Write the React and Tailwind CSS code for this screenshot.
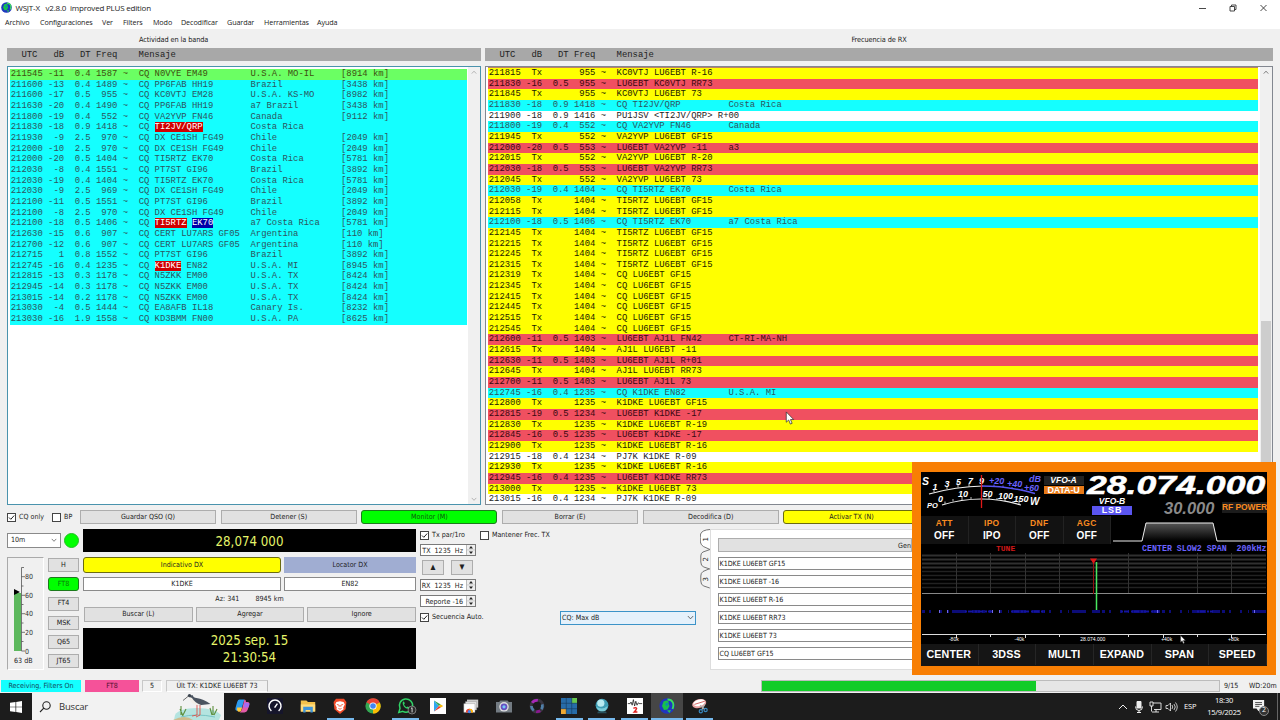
import React from "react";
import clsx from "clsx";

const HEADER = "  UTC   dB   DT Freq    Mensaje";

const MENU = [
  ["Archivo", "w-[35px]"],
  ["Configuraciones", "w-[62px]"],
  ["Ver", "w-[21px]"],
  ["Filters", "w-[30px]"],
  ["Modo", "w-[28px]"],
  ["Decodificar", "w-[46px]"],
  ["Guardar", "w-[37px]"],
  ["Herramientas", "w-[53px]"],
  ["Ayuda", "w-[30px]"],
];

// utc, dB, DT, freq, message, country, distance
const BAND = [
  ["211545", "-11", "0.4", "1587", "CQ N0VYE EM49", "U.S.A. MO-IL", "[8914 km]"],
  ["211600", "-13", "0.4", "1489", "CQ PP6FAB HH19", "Brazil", "[3438 km]"],
  ["211600", "-17", "0.5", "955", "CQ KC0VTJ EM28", "U.S.A. KS-MO", "[8982 km]"],
  ["211630", "-20", "0.4", "1490", "CQ PP6FAB HH19", "a7 Brazil", "[3438 km]"],
  ["211800", "-19", "0.4", "552", "CQ VA2YVP FN46", "Canada", "[9112 km]"],
  ["211830", "-18", "0.9", "1418", "CQ TI2JV/QRP", "Costa Rica", ""],
  ["211930", "-9", "2.5", "970", "CQ DX CE1SH FG49", "Chile", "[2049 km]"],
  ["212000", "-10", "2.5", "970", "CQ DX CE1SH FG49", "Chile", "[2049 km]"],
  ["212000", "-20", "0.5", "1404", "CQ TI5RTZ EK70", "Costa Rica", "[5781 km]"],
  ["212030", "-8", "0.4", "1551", "CQ PT7ST GI96", "Brazil", "[3892 km]"],
  ["212030", "-19", "0.4", "1404", "CQ TI5RTZ EK70", "Costa Rica", "[5781 km]"],
  ["212030", "-9", "2.5", "969", "CQ DX CE1SH FG49", "Chile", "[2049 km]"],
  ["212100", "-11", "0.5", "1551", "CQ PT7ST GI96", "Brazil", "[3892 km]"],
  ["212100", "-8", "2.5", "970", "CQ DX CE1SH FG49", "Chile", "[2049 km]"],
  ["212100", "-18", "0.5", "1406", "CQ TI5RTZ EK70", "a7 Costa Rica", "[5781 km]"],
  ["212630", "-15", "0.6", "907", "CQ CERT LU7ARS GF05", "Argentina", "[110 km]"],
  ["212700", "-12", "0.6", "907", "CQ CERT LU7ARS GF05", "Argentina", "[110 km]"],
  ["212715", "1", "0.8", "1552", "CQ PT7ST GI96", "Brazil", "[3892 km]"],
  ["212745", "-16", "0.4", "1235", "CQ K1DKE EN82", "U.S.A. MI", "[8945 km]"],
  ["212815", "-13", "0.3", "1178", "CQ N5ZKK EM00", "U.S.A. TX", "[8424 km]"],
  ["212945", "-14", "0.3", "1178", "CQ N5ZKK EM00", "U.S.A. TX", "[8424 km]"],
  ["213015", "-14", "0.2", "1178", "CQ N5ZKK EM00", "U.S.A. TX", "[8424 km]"],
  ["213030", "-4", "0.5", "1444", "CQ EA8AFB IL18", "Canary Is.", "[8232 km]"],
  ["213030", "-16", "1.9", "1558", "CQ KD3BMM FN00", "U.S.A. PA", "[8625 km]"],
];

// words picked out in the band list, by row index
const MARKS = {
  5: { "TI2JV/QRP": "bg-[#d00000] text-white" },
  14: { TI5RTZ: "bg-[#d00000] text-white", EK70: "bg-[#0000a8] text-white" },
  18: { K1DKE: "bg-[#d00000] text-white" },
};

const RX = [
  ["y", "211815", "Tx", "", "955", "KC0VTJ LU6EBT R-16"],
  ["r", "211830", "-16", "0.5", "955", "LU6EBT KC0VTJ RR73"],
  ["y", "211845", "Tx", "", "955", "KC0VTJ LU6EBT 73"],
  ["c", "211830", "-18", "0.9", "1418", "CQ TI2JV/QRP", "Costa Rica"],
  ["w", "211900", "-18", "0.9", "1416", "PU1JSV <TI2JV/QRP> R+00"],
  ["c", "211800", "-19", "0.4", "552", "CQ VA2YVP FN46", "Canada"],
  ["y", "211945", "Tx", "", "552", "VA2YVP LU6EBT GF15"],
  ["r", "212000", "-20", "0.5", "553", "LU6EBT VA2YVP -11", "a3"],
  ["y", "212015", "Tx", "", "552", "VA2YVP LU6EBT R-20"],
  ["r", "212030", "-18", "0.5", "553", "LU6EBT VA2YVP RR73"],
  ["y", "212045", "Tx", "", "552", "VA2YVP LU6EBT 73"],
  ["c", "212030", "-19", "0.4", "1404", "CQ TI5RTZ EK70", "Costa Rica"],
  ["y", "212058", "Tx", "", "1404", "TI5RTZ LU6EBT GF15"],
  ["y", "212115", "Tx", "", "1404", "TI5RTZ LU6EBT GF15"],
  ["c", "212100", "-18", "0.5", "1406", "CQ TI5RTZ EK70", "a7 Costa Rica"],
  ["y", "212145", "Tx", "", "1404", "TI5RTZ LU6EBT GF15"],
  ["y", "212215", "Tx", "", "1404", "TI5RTZ LU6EBT GF15"],
  ["y", "212245", "Tx", "", "1404", "TI5RTZ LU6EBT GF15"],
  ["y", "212315", "Tx", "", "1404", "TI5RTZ LU6EBT GF15"],
  ["y", "212319", "Tx", "", "1404", "CQ LU6EBT GF15"],
  ["y", "212345", "Tx", "", "1404", "CQ LU6EBT GF15"],
  ["y", "212415", "Tx", "", "1404", "CQ LU6EBT GF15"],
  ["y", "212445", "Tx", "", "1404", "CQ LU6EBT GF15"],
  ["y", "212515", "Tx", "", "1404", "CQ LU6EBT GF15"],
  ["y", "212545", "Tx", "", "1404", "CQ LU6EBT GF15"],
  ["r", "212600", "-11", "0.5", "1403", "LU6EBT AJ1L FN42", "CT-RI-MA-NH"],
  ["y", "212615", "Tx", "", "1404", "AJ1L LU6EBT -11"],
  ["r", "212630", "-11", "0.5", "1403", "LU6EBT AJ1L R+01"],
  ["y", "212645", "Tx", "", "1404", "AJ1L LU6EBT RR73"],
  ["r", "212700", "-11", "0.5", "1403", "LU6EBT AJ1L 73"],
  ["c", "212745", "-16", "0.4", "1235", "CQ K1DKE EN82", "U.S.A. MI"],
  ["y", "212800", "Tx", "", "1235", "K1DKE LU6EBT GF15"],
  ["r", "212815", "-19", "0.5", "1234", "LU6EBT K1DKE -17"],
  ["y", "212830", "Tx", "", "1235", "K1DKE LU6EBT R-19"],
  ["r", "212845", "-16", "0.5", "1235", "LU6EBT K1DKE -17"],
  ["y", "212900", "Tx", "", "1235", "K1DKE LU6EBT R-16"],
  ["w", "212915", "-18", "0.4", "1234", "PJ7K K1DKE R-09"],
  ["y", "212930", "Tx", "", "1235", "K1DKE LU6EBT R-16"],
  ["r", "212945", "-16", "0.4", "1235", "LU6EBT K1DKE RR73"],
  ["y", "213000", "Tx", "", "1235", "K1DKE LU6EBT 73"],
  ["w", "213015", "-16", "0.4", "1234", "PJ7K K1DKE R-09"],
];

const ROW_COLORS = {
  y: "bg-[#ffff00] text-[#1c1c00]",
  r: "bg-[#f05060] text-[#3a0810]",
  c: "bg-[#14ffff] text-[#2d5560]",
  w: "bg-white text-[#222]",
};

const MONO = "font-['Liberation_Mono',monospace] text-[8.885px] whitespace-pre";

const prefix = (utc, db, dt, freq) =>
  `${utc} ${db.padStart(3)}  ${dt.padStart(3)} ${freq.padStart(4)} ~  `;

const BandRow = ({ row, index }) => {
  const [utc, db, dt, freq, msg, country, dist] = row;
  const marks = MARKS[index] || {};
  const words = msg.split(" ");
  return (
    <div
      className={clsx(
        "h-[10.667px] pl-[0.8px] leading-[11.700px]",
        index === 0 ? "bg-[#6bff63] text-[#3f4f10]" : "bg-[#14ffff] text-[#2d5560]"
      )}
    >
      {prefix(utc, db, dt, freq)}
      {words.map((word, i) => (
        <React.Fragment key={i}>
          <span className={marks[word]}>{word}</span>
          {i < words.length - 1 ? " " : ""}
        </React.Fragment>
      ))}
      {" ".repeat(21 - msg.length)}
      {country.padEnd(17)}
      {dist}
    </div>
  );
};

const Button = ({ className, children }) => (
  <button
    className={clsx(
      "flex items-center justify-center border whitespace-nowrap",
      className || "border-[#adadad] bg-[#e1e1e1]"
    )}
  >
    {children}
  </button>
);

const Check = ({ checked, children }) => (
  <label className="flex items-center gap-[3px] whitespace-nowrap">
    <span className="flex size-[9px] shrink-0 items-center justify-center border border-[#444] bg-white">
      {checked && (
        <svg viewBox="0 0 7 7" className="size-[7px]" fill="none" stroke="#222">
          <path d="M1 3.5 2.8 5.3 6.2 1.5" />
        </svg>
      )}
    </span>
    {children}
  </label>
);

const Spin = ({ children }) => (
  <div className="flex h-[12px] w-[56px] border border-[#7a7a7a] bg-white">
    <span className="flex-1 pr-[3px] text-right leading-[12px] whitespace-pre">{children}</span>
    <span className="flex w-[9px] items-center justify-center border-l border-[#bbb] bg-[#eee]">
      <svg viewBox="0 0 8 10" className="h-[10px] w-[8px]" fill="#222">
        <path d="M4 1 6 3.6H2zM4 9 6 6.4H2z" />
        <path d="M0 4.7h8v.5H0z" fill="#aaa" />
      </svg>
    </span>
  </div>
);

const Chevron = ({ className }) => (
  <svg viewBox="0 0 8 6" className={className} fill="none" stroke="#444" strokeWidth="0.9">
    <path d="M1 1.2 4 4.4 7 1.2" />
  </svg>
);

const Globe = ({ className }) => (
  <svg viewBox="0 0 16 16" className={className}>
    <circle cx="8" cy="8" r="7.7" fill="#2037c0" />
    <path d="M4.500 3.500c3-2 6-1 5 2l1 2.500-2 3.500-3.500.5-2-4z" fill="#19c24a" />
    <path d="M8.500 1.500C14 1.500 15.500 6 13.500 11" fill="none" stroke="#3be05a" strokeWidth="1.800" />
    <path d="M8 12.500l4-.5-1.500 3z" fill="#24c456" />
    <path d="M6 6 8.500 4.500l1 2-2 2z" fill="#0b8fae" />
  </svg>
);

const Cursor = ({ className }) => (
  <svg viewBox="0 0 10 15" className={className}>
    <path d="M1 1v11l2.6-2.4L5.4 14l1.9-.8-1.8-4H9z" fill="#fff" stroke="#333" strokeWidth="0.8" />
  </svg>
);

const TitleBar = () => (
  <div className="flex h-[15px] shrink-0 items-center bg-white font-['Open_Sans',sans-serif] text-[#222]">
    <Globe className="ml-[1px] size-[11px]" />
    <span className="ml-[3.500px] text-[8px] tracking-[-0.2px] whitespace-pre">
      {"WSJT-X   v2.8.0  improved PLUS edition"}
    </span>
    <svg
      viewBox="0 0 70 10"
      className="mr-[11px] ml-auto h-[10px] w-[70px]"
      fill="none"
      stroke="#333"
      strokeWidth="0.9"
    >
      <path d="M0 5.500h7M31 3.500h4.500V8H31zM32.500 3.500V2H37v4.500h-1.500M61.500 2l6 6M67.500 2l-6 6" />
    </svg>
  </div>
);

const BandPanel = () => (
  <section className="flex w-[474px] flex-col">
    <h2 className="flex h-[19px] items-center pt-[4px] pl-[132px] text-[7.300px] tracking-[-0.1px]">
      Actividad en la banda
    </h2>
    <div className={clsx(MONO, "h-[13px] bg-[#a8a8a8] pl-[3.800px] leading-[14.500px] text-[#222]")}>{HEADER}</div>
    <div className="mt-[5px] flex h-[439px] border border-[#4a93ad] bg-white">
      <div className={clsx(MONO, "mt-[2px] ml-[2px] w-[457px]")}>
        {BAND.map((row, i) => (
          <BandRow key={i} row={row} index={i} />
        ))}
      </div>
      <div className="ml-auto flex w-[12px] flex-col items-center justify-between bg-[#f0f0f0] py-[3px]">
        <Chevron className="w-[6px] rotate-180 opacity-50" />
        <Chevron className="w-[6px] opacity-50" />
      </div>
    </div>
  </section>
);

const RxPanel = () => (
  <section className="flex w-[788px] flex-col">
    <h2 className="flex h-[19px] items-center justify-center pt-[4px] text-[7.300px] tracking-[-0.1px]">
      Frecuencia de RX
    </h2>
    <div className={clsx(MONO, "h-[13px] bg-[#a8a8a8] pl-[3.800px] leading-[14.500px] text-[#222]")}>{HEADER}</div>
    <div className="mt-[5px] flex h-[439px] overflow-hidden border border-[#828790] bg-white">
      <div className={clsx(MONO, "ml-[2px] w-[770px] border-t border-[#c08060]")}>
        {RX.map(([kind, utc, db, dt, freq, msg, country], i) => (
          <div key={i} className={clsx("h-[10.667px] pl-[0.8px] leading-[11px]", ROW_COLORS[kind])}>
            {prefix(utc, db, dt, freq) + (country ? msg.padEnd(21) + country : msg)}
          </div>
        ))}
      </div>
      <div className="ml-auto flex w-[12px] flex-col items-center bg-[#f0f0f0] pt-[3px]">
        <Chevron className="w-[6px] rotate-180" />
        <div className="mt-[246px] h-[150px] w-[10px] bg-[#cdcdcd]" />
      </div>
    </div>
  </section>
);

const ButtonRow = () => (
  <div className="mt-[5px] flex h-[14px] pl-[7px]">
    <div className="flex w-[73px] gap-[8px]">
      <Check checked>CQ only</Check>
      <Check>BP</Check>
    </div>
    <div className="grid grid-cols-[repeat(6,136px)] gap-[4.7px]">
      <Button>Guardar QSO (Q)</Button>
      <Button>Detener (S)</Button>
      <Button className="rounded-[3px] border-[#1c7a1c] bg-[#00ff00] text-[#0a5a0a]">Monitor (M)</Button>
      <Button>Borrar (E)</Button>
      <Button>Decodifica (D)</Button>
      <Button className="rounded-[3px] border-[#6b6b10] bg-[#ffff00]">Activar TX (N)</Button>
    </div>
  </div>
);

const LevelMeter = () => (
  <div className="flex h-[113px] w-[37px] flex-col border border-t-[#aaa] border-r-white border-b-white border-l-[#aaa]">
    <svg viewBox="0 0 35 98" className="h-[98px] w-[35px]" fill="none" stroke="#555" strokeWidth="0.8">
      <rect x="6" y="35" width="7" height="58" fill="#5cb85c" stroke="none" />
      <path d="M6 31v6l6-3z" fill="#000" stroke="none" />
      <path d="M13.500 9.500v83.500M13.500 9.500h2.500M13.500 18.700h3.500M13.500 28h2M13.500 37.300h3.500M13.500 46.500h2M13.500 55.700h3.500M13.500 65h2M13.500 74.300h3.500M13.500 83.500h2M13.500 93h3.500" />
      <g fill="#333" stroke="none" fontSize="7" fontFamily="DejaVu Sans Condensed, DejaVu Sans, sans-serif">
        <text x="17" y="21.200">80</text>
        <text x="17" y="39.800">60</text>
        <text x="17" y="58.200">40</text>
        <text x="17" y="76.800">20</text>
        <text x="17" y="95.500">0</text>
      </g>
    </svg>
    <span className="pl-[6px] leading-[9px]">63 dB</span>
  </div>
);

const LeftColumn = () => (
  <div className="flex w-[72px] flex-col">
    <div className="mt-[4px] flex items-center gap-[3px]">
      <div className="flex h-[15px] w-[54px] items-center justify-between border border-[#8a8a8a] bg-white px-[3px]">
        10m
        <Chevron className="w-[6px]" />
      </div>
      <span className="size-[15px] rounded-full border border-[#20c020] bg-[#00ff00]" />
    </div>
    <div className="mt-[9px] flex justify-between">
      <LevelMeter />
      <div className="mt-[1px] flex flex-col gap-[5.300px]">
        {["H", "FT8", "FT4", "MSK", "Q65", "JT65"].map((mode) => (
          <div key={mode} className="flex h-[14px] w-[31px]">
            <Button
              className={clsx(
                "flex-1",
                mode === "FT8"
                  ? "rounded-[3px] border-[#1c7a1c] bg-[#00ff00] text-[#0a7a0a]"
                  : "border-[#adadad] bg-[#e1e1e1]"
              )}
            >
              {mode}
            </Button>
          </div>
        ))}
      </div>
    </div>
  </div>
);

const DxColumn = () => (
  <div className="flex w-[333px] flex-col">
    <div className="flex h-[23px] items-center justify-center bg-black pt-[2px] text-[13.200px] text-[#e6f56a]">
      28,074 000
    </div>
    <div className="mt-[5px] grid h-[16px] grid-cols-[198px_132px] gap-[3px]">
      <Button className="rounded-[3px] border-[#6b6b10] bg-[#ffff00]">Indicativo DX</Button>
      <Button className="border-[#a0add2] bg-[#a0add2]">Locator DX</Button>
    </div>
    <div className="mt-[4px] grid h-[13px] grid-cols-[198px_132px] gap-[3px] text-center leading-[12px]">
      <div className="border border-[#8a8a8a] bg-white">K1DKE</div>
      <div className="border border-[#8a8a8a] bg-white">EN82</div>
    </div>
    <div className="mt-[4px] flex h-[10px] items-center justify-center gap-[16px]">
      <span>Az: 341</span>
      <span>8945 km</span>
    </div>
    <div className="mt-[3px] grid h-[15px] grid-cols-3 gap-[3px] pl-[1px]">
      <Button>Buscar (L)</Button>
      <Button>Agregar</Button>
      <Button>Ignore</Button>
    </div>
    <div className="mt-[6px] flex h-[41px] flex-col items-center justify-center bg-black pt-[2px] text-[13.200px] leading-[16.500px] text-[#e6f56a]">
      <span>2025 sep. 15</span>
      <span>21:30:54</span>
    </div>
  </div>
);

const TxColumn = () => (
  <div className="flex w-[286px] flex-col">
    <div className="flex h-[12px] gap-[15px]">
      <Check checked>Tx par/1ro</Check>
      <Check>Mantener Frec. TX</Check>
    </div>
    <div className="mt-[3px]">
      <Spin>TX  1235  Hz</Spin>
    </div>
    <div className="mt-[4px] ml-[2px] flex h-[15px] gap-[7px]">
      <div className="flex w-[22px]">
        <Button className="flex-1 border-[#adadad] bg-[#e1e1e1]">▲</Button>
      </div>
      <div className="flex w-[22px]">
        <Button className="flex-1 border-[#adadad] bg-[#e1e1e1]">▼</Button>
      </div>
    </div>
    <div className="mt-[4px] flex flex-col gap-[4px]">
      <Spin>RX  1235  Hz</Spin>
      <Spin>Reporte -16</Spin>
    </div>
    <div className="mt-[3px] flex h-[15px] justify-between">
      <Check checked>Secuencia Auto.</Check>
      <div className="mt-[1px] mr-[10px] flex h-[14px] w-[136px] items-center justify-between border border-[#3c93c8] bg-[#e5f1fb] px-[1px]">
        CQ: Max dB
        <Chevron className="w-[7px]" />
      </div>
    </div>
  </div>
);

const MESSAGES = [
  "K1DKE LU6EBT GF15",
  "K1DKE LU6EBT -16",
  "K1DKE LU6EBT R-16",
  "K1DKE LU6EBT RR73",
  "K1DKE LU6EBT 73",
  "CQ LU6EBT GF15",
];

const MessageTabs = () => (
  <div className="flex flex-1">
    <svg viewBox="0 0 11 62" className="-mr-px h-[62px] w-[11px]" fill="#f3f3f3" stroke="#555" strokeWidth="0.8">
      <path d="M10 39.500 3 42.500Q.8 44 .8 47v5q0 4 3 5l6 2" />
      <path d="M10 20.500 3 23Q.8 24 .8 27v6q0 4 3 5l6 2" />
      <path d="M10 .5Q2 1 .6 5 0 8 .4 13q.4 3 3 4.500l6.600 3" fill="#fff" />
      <g fill="#222" stroke="none" fontSize="7" fontFamily="DejaVu Sans, sans-serif">
        <text transform="translate(8 12.500) rotate(-90)">1</text>
        <text transform="translate(8 32.500) rotate(-90)">2</text>
        <text transform="translate(8 52.500) rotate(-90)">3</text>
      </g>
    </svg>
    <div className="h-[141px] flex-1 border border-[#ddd] bg-white pt-[8px] pl-[7px]">
      <div className="h-[14px] w-[194px] border border-[#adadad] bg-[#e1e1e1] text-right leading-[13px]">Gen</div>
      <div className="mt-[5px] flex flex-col gap-[5px]">
        {MESSAGES.map((m) => (
          <div key={m} className="h-[13px] border border-[#8a8a8a] bg-white pl-[0.500px] leading-[12px] tracking-[-0.03px]">
            {m}
          </div>
        ))}
      </div>
    </div>
  </div>
);

const StatusBar = () => (
  <div className="mt-[8px] flex h-[14px] items-center pl-[1px] text-[#222]">
    <span className="flex h-[12px] w-[80px] items-center justify-center bg-[#14ffff] text-[#104858]">
      Receiving, Filters On
    </span>
    <span className="ml-[4px] flex h-[12px] w-[54px] items-center justify-center bg-[#f55299] text-[#501030]">FT8</span>
    <span className="ml-[3px] flex h-[12px] w-[20px] items-center justify-center border border-[#c8c8c8] border-r-white border-b-white">
      5
    </span>
    <span className="ml-[4px] flex h-[12px] w-[102px] items-center justify-center border border-[#c8c8c8] border-r-[#bbb] border-b-white">
      Últ TX: K1DKE LU6EBT 73
    </span>
    <div className="ml-auto h-[12px] w-[459px] border border-[#bcbcbc] bg-[#e6e6e6]">
      <div className="h-full w-[60%] bg-[#12cc28]" />
    </div>
    <span className="ml-[4px] w-[25px] pt-[1px]">9/15</span>
    <span className="w-[31px] pt-[1px]">WD:20m</span>
  </div>
);

/* radio front panel */

const SMeter = () => (
  <svg viewBox="0 0 122 44" className="h-[44px] w-[122px] shrink-0" fontFamily="Liberation Sans, sans-serif" fontWeight="bold" fontStyle="italic">
    <path d="M8 22Q35 14.500 62 14" fill="none" stroke="#eee" strokeWidth="1.200" />
    <path d="M60 14Q88 14 114 21.500" fill="none" stroke="#5a55f0" strokeWidth="1.400" />
    <path d="M21 33Q60 21 100 33" fill="none" stroke="#eee" strokeWidth="1.200" />
    <path d="M13 20v-3M26 17v-3M37 15.500v-3M48 14.500v-3M24 32v-2.500M32 29.500v-2.500M41 28v-3M50 27v-2M68 27v-3M76 28v-2M84 29v-3M92 31v-2M98 32.500v-3" stroke="#eee" strokeWidth="0.800" />
    <path d="M73 14.500v-2M82 15.500v-2M91 17v-2M101 18.500v-2" stroke="#5a55f0" />
    <g fill="#fff" fontSize="9">
      <text x="1" y="12.500" fontSize="10.500">S</text>
      <text x="11.500" y="17.500">1</text>
      <text x="23.500" y="15">3</text>
      <text x="35" y="13">5</text>
      <text x="47" y="12">7</text>
      <text x="58" y="11.500">9</text>
      <text x="6" y="36" fontSize="7.500">PO</text>
      <text x="17" y="29.500">0</text>
      <text x="37" y="25">10</text>
      <text x="61.500" y="25">50</text>
      <text x="77" y="26.500">100</text>
      <text x="92.500" y="29.500">150</text>
      <text x="109" y="33" fontSize="10">W</text>
    </g>
    <g fill="#6a62ff" fontSize="9">
      <text x="68" y="12">+20</text>
      <text x="86" y="15">+40</text>
      <text x="103" y="18.500" fontSize="8.800">+60</text>
      <text x="108" y="10" fontSize="9">dB</text>
    </g>
    <path d="M60.500 3v33" stroke="#e01818" strokeWidth="1.300" />
  </svg>
);

const Scope = () => (
  <svg viewBox="0 0 346 90" className="h-[90px] w-[346px]">
    <path d="M1 2.500h344M1 6.500h344M1 10.500h344M1 14.500h344" stroke="#303030" strokeWidth="1.800" />
    <path d="M1 18.500h344M1 22.500h344M1 26.500h344M1 30.500h344M1 34.500h344" stroke="#222" strokeWidth="1.500" />
    <path d="M35.500 0v41M69.500 0v41M104.500 0v41M138.500 0v41M207.500 0v41M276.500 0v41M310.500 0v41" stroke="#333" />
    <path d="M1 40.500h344" stroke="#888" />
    <path d="M172.500 10v31" stroke="#901010" strokeWidth="1" />
    <path d="M169 5.500h7l-2 3-1.500 2.500-1.500-2.500z" fill="#e01818" />
    <path d="M175.500 9v49" stroke="#49e860" strokeWidth="1.500" />
    <path d="M1 58.500h344" stroke="#0c0c78" strokeWidth="3" strokeDasharray="3 4 2 9 2 6 1 3 14 6 8 2" />
    <path d="M44 58.500h28M90 58.500h34M200 58.500h40M276 58.500h16" stroke="#1414a0" strokeWidth="2" strokeDasharray="2 1 5 2" />
    <path d="M18 58.500h1M26 58.500h1M71 58.500h1M78 58.500h1M236 58.500h1M333 58.500h1" stroke="#7068e8" strokeWidth="3" />
    <path d="M1 81.500h344" stroke="#ddd" />
    <path d="M35.500 82v3M69.500 82v2M104.500 82v3M138.500 82v2M207.500 82v2M242.500 82v3M276.500 82v2M310.500 82v3" stroke="#ddd" />
  </svg>
);

const Radio = () => (
  <div className="absolute top-[462px] left-[912px] flex h-[213px] w-[364px] flex-col border-[9px] border-t-[10px] border-[#f87f04] bg-black font-['Liberation_Sans',sans-serif] font-bold text-white">
    <div className="flex h-[44px] justify-between">
      <SMeter />
      <div className="mt-[4px] flex w-[40px] flex-col text-center text-[8.500px] leading-[9px]">
        <span className="bg-[#222] italic">VFO-A</span>
        <span className="mt-[1px] bg-[#e87a18] text-[9px] leading-[8px] tracking-[-0.2px] whitespace-nowrap">DATA-U</span>
      </div>
      <div className="flex w-[183px] flex-col">
        <div className="h-[25px] pl-[3px]">
          <span className="inline-block origin-left scale-x-[1.37] text-[26px] leading-[26px] italic [-webkit-text-stroke:0.5px_white]">
            28.074.000
          </span>
        </div>
        <div className="flex h-[19px] items-start">
          <div className="mt-[1px] ml-[8px] w-[40px] text-center text-[8.500px] leading-[7px] italic">
            <div>VFO-B</div>
            <div className="mt-[1px] bg-[#5a55f0] text-[9px] leading-[9px] tracking-[0.8px] not-italic">LSB</div>
          </div>
          <span className="mt-[4px] ml-[32px] inline-block w-[50px] text-[16.500px] leading-[14px] text-[#8a8a8a] italic">
            30.000
          </span>
          <span className="mt-[5px] ml-auto bg-[#1c1c1c] text-[8.500px] leading-[11px] tracking-[-0.1px] whitespace-nowrap text-[#f88a20]">
            RF POWER
          </span>
        </div>
      </div>
    </div>
    <div className="flex h-[28px]">
      {[
        ["ATT", "OFF"],
        ["IPO", "IPO"],
        ["DNF", "OFF"],
        ["AGC", "OFF"],
      ].map(([name, value]) => (
        <div
          key={name}
          className="flex w-[47.500px] flex-col items-center border-r border-[#222] bg-[#121212] pt-[3px] text-[8.500px] leading-[9px]"
        >
          <span className="tracking-[0.3px] text-[#f88a20]">{name}</span>
          <span className="mt-[3px] text-[10px] tracking-[0.1px]">{value}</span>
        </div>
      ))}
      <svg viewBox="0 0 156 28" className="h-[28px] w-[156px]">
        <defs>
          <linearGradient id="passband" x1="0" y1="0" x2="0" y2="1">
            <stop offset="0" stopColor="#555" />
            <stop offset="1" stopColor="#000" />
          </linearGradient>
        </defs>
        <path d="M31 25 35 7h67l4 18z" fill="url(#passband)" />
        <path d="M2 25h29L35 7h67l4 18h50" fill="none" stroke="#eee" />
      </svg>
    </div>
    <div className="flex h-[9px] items-center font-['Liberation_Mono',monospace] text-[8px] leading-[9px]">
      <span className="ml-[75px] w-[146px] text-[#d01818]">TUNE</span>
      <span className="text-[8.300px] whitespace-pre text-[#6a62ff]">CENTER SLOW2 SPAN  200kHz</span>
    </div>
    <Scope />
    <div className="-mt-[7px] mb-[1px] flex h-[6px] justify-around text-[5px] leading-[6px] font-normal">
      <span>-80k</span>
      <span>-40k</span>
      <span>28.074.000</span>
      <span>+40k</span>
      <span>+80k</span>
    </div>
    <div className="mt-[1px] grid flex-1 grid-cols-6 bg-[#151515] pb-[1px] text-[10.700px] tracking-[0.1px]">
      {["CENTER", "3DSS", "MULTI", "EXPAND", "SPAN", "SPEED"].map((name) => (
        <span key={name} className="flex items-center justify-center border-r border-[#262626] pr-[1px]">
          {name}
        </span>
      ))}
    </div>
    <Cursor className="absolute top-[163px] left-[259px] h-[9px] w-[6px]" />
  </div>
);

/* taskbar icons, each on a 20x20 box */

const APPS = [
  {
    id: "copilot",
    art: (
      <>
        <path d="M7 2h6l-3 10q-1 4-4 4H4q-3 0-2-4l2-7q1-3 3-3z" fill="#2d9bf0" />
        <path d="M13 2q2 0 2 3h2q3 0 2 4l-2 6q-1 3-4 3H7q2-1 3-4z" fill="#e45aa8" />
        <path d="M4 12h6l-1 4q-1 2-4 1-2-1-1-5z" fill="#ffc83c" />
        <path d="M13 6h4q3 0 2 3l-1 3h-6z" fill="#a56af0" />
      </>
    ),
  },
  {
    id: "speed",
    art: (
      <>
        <path d="M0 0h20v20H0z" fill="#15152b" />
        <path d="M5.500 16A7.500 7.500 0 1 1 14.500 16M9.500 12l3.500-5" fill="none" stroke="#fff" strokeWidth="1.800" />
      </>
    ),
  },
  {
    id: "files",
    art: (
      <>
        <path d="M1 3h7l2 2h9v12H1z" fill="#f3c14b" />
        <path d="M1 8h18v9H1z" fill="#ffdc7c" />
        <path d="M4 11h12v7h-3v-3H7v3H4z" fill="#3f94d8" />
      </>
    ),
  },
  {
    id: "brave",
    open: true,
    art: (
      <>
        <path d="M5 1h10l3 4-1 9-7 6-7-6-1-9z" fill="#f04a28" />
        <path d="M5.500 5 10 4l4.500 1 1.500 3-2 4 .5 2L10 17l-4.500-3 .5-2-2-4z" fill="#fff" />
        <path d="M6 8l3 1v2M14 8l-3 1v2M8 13l2 1 2-1" stroke="#f04a28" fill="none" />
      </>
    ),
  },
  {
    id: "chrome",
    art: (
      <>
        <circle cx="10" cy="10" r="9.500" fill="#34a853" />
        <path d="M10 10 1.800 5.200A9.500 9.500 0 0 1 18.500 5.500z" fill="#ea4335" />
        <path d="M10 10 18.500 5.500A9.500 9.500 0 0 1 10 19.500z" fill="#fbbc05" />
        <circle cx="10" cy="10" r="4.500" fill="#fff" />
        <circle cx="10" cy="10" r="3.500" fill="#4285f4" />
      </>
    ),
  },
  {
    id: "whatsapp",
    open: true,
    art: (
      <>
        <path d="M1 18l1.500-5A8.300 8.300 0 1 1 6 16.700z" fill="none" stroke="#30d366" strokeWidth="1.900" />
        <path d="M6 5q1-1 1.800 0l.7 2-1 1q1 2.500 3.500 3.500l1-1 2 1q.5 1-1 2-3 .5-5.500-2.500-2.500-3-1.500-6z" fill="#30d366" />
        <circle cx="17.500" cy="15" r="5" fill="#2c2c2c" stroke="#bbb" strokeWidth="0.700" />
        <path d="M16.300 13l1.300-.8v5.800" stroke="#fff" fill="none" />
      </>
    ),
  },
  {
    id: "play",
    art: (
      <>
        <path d="M0 0h20v20H0z" fill="#fff" />
        <path d="M5 3l6 7-6 7z" fill="#30a8f0" />
        <path d="M5 3l8.500 5L11 10z" fill="#34a853" />
        <path d="M13.500 8l3 2-3 2L11 10z" fill="#fbbc05" />
        <path d="M5 17l6-7 2.500 2z" fill="#ea4335" />
      </>
    ),
  },
  {
    id: "chrome-apps",
    art: (
      <>
        <path d="M5 2h14v10H5z" fill="#ccc" />
        <path d="M3 4.500h14V15H3z" fill="#e5e5e5" stroke="#888" strokeWidth="0.500" />
        <path d="M1 7h14v11H1z" fill="#fff" stroke="#888" strokeWidth="0.500" />
        <path d="M3.500 18a4.500 4.500 0 0 1 9 0z" fill="#ea4335" />
        <path d="M8 13.500A4.500 4.500 0 0 1 12.500 18H8z" fill="#fbbc05" />
        <circle cx="8" cy="17" r="2" fill="#4285f4" />
      </>
    ),
  },
  {
    id: "camera",
    art: (
      <>
        <path d="M0 5h4l1.500-2h9L16 5h4v13H0z" fill="#737b82" />
        <circle cx="10" cy="11" r="6" fill="#ddd" />
        <circle cx="10" cy="11" r="4.200" fill="#6650c0" />
        <circle cx="10" cy="11" r="2" fill="#74c8f8" />
      </>
    ),
  },
  {
    id: "ring",
    art: (
      <g fill="none" strokeWidth="3.500">
        <circle cx="10" cy="10" r="7.500" stroke="#38343f" />
        <path d="M4 6a7 7 0 0 1 7-3" stroke="#a828b8" />
        <path d="M3 10a7 7 0 0 0 3 5.500M16.500 8a7 7 0 0 1-1 6" stroke="#507fa8" />
        <path d="M9 17a7 7 0 0 0 5-1" stroke="#8a1890" />
      </g>
    ),
  },
  {
    id: "grid",
    open: true,
    art: (
      <>
        <path d="M0 0h20v20H0z" fill="#276ca8" />
        <path d="M13.500 0H20v6.500h-6.500z" fill="#68c850" />
        <path d="M0 13.500h6.500V20H0z" fill="#f0a830" />
        <path d="M6.600 0v20M13.400 0v20M0 6.600h20M0 13.400h20" stroke="#163c60" strokeWidth="0.800" />
      </>
    ),
  },
  {
    id: "orb",
    open: true,
    art: (
      <>
        <circle cx="10" cy="9" r="8" fill="#3e9db4" />
        <circle cx="8.500" cy="6.500" r="4.500" fill="#b8eaf0" />
        <path d="M3 11q7 5 14-1-1 7-7 7-5 0-7-6z" fill="#7acbd8" />
        <path d="M5 17h10l1 2H4z" fill="#28505c" />
      </>
    ),
  },
  {
    id: "wave",
    open: true,
    art: (
      <>
        <path d="M0 0h20v20H0z" fill="#fff" />
        <path d="M1 7h3l1-2 1.500 4L8 2l1.500 8L11 4l1.500 5L14 6l1 1h4" fill="none" stroke="#222" />
        <path d="M8 13q3-2 4 0-.5 2-3 4.500h4" fill="none" stroke="#e02020" strokeWidth="1.800" />
      </>
    ),
  },
  { id: "globe", open: true, active: true },
  {
    id: "snip",
    open: true,
    art: (
      <>
        <ellipse cx="9" cy="7" rx="9" ry="5.500" fill="#e8a0a0" transform="rotate(-15 9 7)" />
        <ellipse cx="9" cy="6" rx="7.500" ry="4" fill="#fff" transform="rotate(-15 9 6)" />
        <path d="M3 8l13-4" stroke="#c84040" />
        <path d="M10 9l6 5M16 8l-4 7" stroke="#b0b0b0" strokeWidth="1.400" />
        <g fill="none" stroke="#3888c0" strokeWidth="1.500">
          <circle cx="11" cy="16.500" r="2" />
          <circle cx="17" cy="15" r="2" />
        </g>
      </>
    ),
  },
];

const Stilt = () => (
  <svg viewBox="0 0 50 27" className="h-[27px] w-[50px]">
    <path d="M2 22q4-7 22-7t24 7l-2 5H1z" fill="#b4e4e0" />
    <path d="M8 24q15-4 34 0" stroke="#79c4c4" fill="none" />
    <path d="M0 27q12-6 20 0z" fill="#cdbb8c" />
    <path d="M8 22V13M10 23l-3-7M10 22l3-6M39 22l-2-7M40 22v-9M41 22l3-6" stroke="#5d8f3c" strokeWidth="1.100" />
    <path d="M24 12v10l-5 1M27 12v10l-4 2" stroke="#e05048" strokeWidth="0.900" fill="none" />
    <path d="M16.500 3q.5 4 3 5 4 5 9 4l9-1q-7-5-14-6-3 0-4-3z" fill="#4b5460" />
    <path d="M16.500 4q.5 5 3.500 6.500 4 2.500 8 1.500-6-2-9-7z" fill="#f3efe8" />
    <circle cx="16.500" cy="2.600" r="1.700" fill="#3b4450" />
    <path d="M15.500 3 10 7.500" stroke="#333" strokeWidth="0.700" />
  </svg>
);

const Taskbar = () => (
  <div className="flex h-[27px] shrink-0 bg-[#1c1c1c] font-['Open_Sans',sans-serif] text-white">
    <div className="flex w-[32px] items-center justify-center">
      <svg viewBox="0 0 12 12" className="size-[12px]" fill="#fff">
        <path d="M0 1.700 5.500 1v4.700H0zM6.200.9 12 0v5.700H6.200zM0 6.300h5.500V11L0 10.300zM6.200 6.300H12V12l-5.800-.9z" />
      </svg>
    </div>
    <div className="flex w-[192px] items-center bg-[#f2f2f2] pl-[7px] text-[#333]">
      <svg viewBox="0 0 12 12" className="size-[12px]" fill="none" stroke="#222" strokeWidth="1.100">
        <circle cx="7.500" cy="4.500" r="3.700" />
        <path d="M4.800 7.200 1 11" />
      </svg>
      <span className="ml-[8px] pt-[1px] text-[9.500px] tracking-[-0.2px]">Buscar</span>
      <span className="mr-[1px] ml-auto">
        <Stilt />
      </span>
    </div>
    <div className="ml-[2px] flex">
      {APPS.map(({ id, art, open, active }) => (
        <div key={id} className="flex w-[32.700px] justify-center">
          <div
            className={clsx(
              "flex h-full items-center justify-center border-b-2",
              active ? "w-[32px] bg-[#464646]" : "w-[27px]",
              open ? "border-[#76b9ed]" : "border-transparent"
            )}
          >
            {art ? (
              <svg viewBox="0 0 20 20" className="size-[16px] overflow-visible">
                {art}
              </svg>
            ) : (
              <Globe className="size-[16px]" />
            )}
          </div>
        </div>
      ))}
    </div>
    <div className="ml-auto flex items-center">
      <svg viewBox="0 0 60 14" className="h-[14px] w-[60px]" fill="none" stroke="#eee">
        <path d="M1 9 5 5l4 4" />
        <path d="M19 1.500h4v6.500h-4z" fill="#eee" />
        <path d="M17.500 6.500q0 4 3.500 4t3.500-4M21 10.500V13M19 12.500h4" />
        <path d="M35 3h8v6.500h-7M34 12h7M38 9.500V12M32 2v4h3V2zM33.500 6v5.500" strokeWidth="0.900" />
        <path d="M48 5.500h2L52.500 3v8L50 8.500h-2zM54 5q1.500 2 0 4M56 4q2.500 3 0 6M57.500 2.500q3.500 4.500 0 9" strokeWidth="0.800" />
      </svg>
      <span className="ml-[6px] w-[13px] text-[7.500px] tracking-[-0.2px]">ESP</span>
      <div className="ml-[8px] flex w-[38px] flex-col items-center text-[7.500px] leading-[11.500px] tracking-[-0.2px]">
        <span>18:30</span>
        <span>15/9/2025</span>
      </div>
      <div className="relative ml-[8px] h-[18px] w-[20px]">
        <svg viewBox="0 0 14 14" className="mt-[2px] ml-[2px] size-[12px]">
          <path d="M0 0h13v10H9l-2.500 3L4 10H0z" fill="#f2f2f2" />
          <path d="M2.500 3h8M2.500 5.200h8M2.500 7.400h5" stroke="#222" strokeWidth="0.900" />
        </svg>
        <span className="absolute top-[8px] left-[8px] flex size-[10px] items-center justify-center rounded-full border border-[#888] bg-[#333] text-[7px]">
          2
        </span>
      </div>
      <span className="ml-[6px] h-[27px] w-[3px] border-l border-[#666]" />
    </div>
  </div>
);

const App = () => (
  <div className="relative flex h-[720px] w-[1280px] flex-col overflow-hidden bg-[#f0f0f0] font-['DejaVu_Sans_Condensed','DejaVu_Sans',sans-serif] text-[7.100px] text-[#222]">
    <TitleBar />
    <nav className="flex h-[14px] shrink-0 items-center bg-white pl-[5px] font-['Open_Sans',sans-serif] text-[7.200px] tracking-[-0.1px]">
      {MENU.map(([label, width]) => (
        <span key={label} className={clsx("shrink-0 whitespace-nowrap", width)}>
          {label}
        </span>
      ))}
    </nav>
    <main className="flex h-[664px] shrink-0 flex-col">
      <div className="flex gap-[4px] pl-[7px]">
        <BandPanel />
        <RxPanel />
      </div>
      <ButtonRow />
      <div className="mt-[5px] flex h-[142px] pl-[7px]">
        <LeftColumn />
        <div className="ml-[4px] flex">
          <DxColumn />
        </div>
        <div className="ml-[4px] flex flex-1 pr-[13px]">
          <TxColumn />
          <div className="-ml-[6px] flex flex-1">
            <MessageTabs />
          </div>
        </div>
      </div>
      <StatusBar />
    </main>
    <Taskbar />
    <Cursor className="absolute top-[411px] left-[785px] h-[14px] w-[10px]" />
    <Radio />
  </div>
);

export default App;
